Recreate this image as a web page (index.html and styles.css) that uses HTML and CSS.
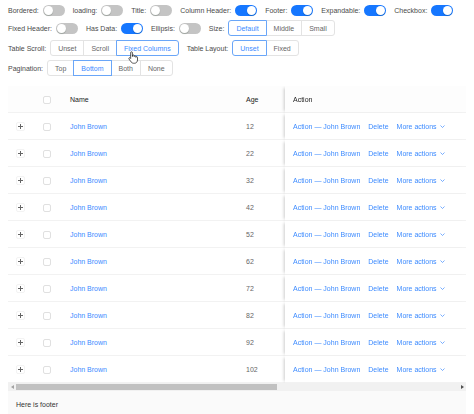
FILE: index.html
```html
<!DOCTYPE html>
<html lang="en">
<head>
<meta charset="utf-8">
<title>Table settings</title>
<link rel="stylesheet" href="styles.css">
</head>
<body>
<div class="controls">
  <div class="row row1">
    <div class="item"><span class="lbl">Bordered:</span><span class="switch"><span class="knob"></span></span></div>
    <div class="item"><span class="lbl">loading:</span><span class="switch"><span class="knob"></span></span></div>
    <div class="item"><span class="lbl">Title:</span><span class="switch"><span class="knob"></span></span></div>
    <div class="item"><span class="lbl">Column Header:</span><span class="switch on"><span class="knob"></span></span></div>
    <div class="item"><span class="lbl">Footer:</span><span class="switch on"><span class="knob"></span></span></div>
    <div class="item"><span class="lbl">Expandable:</span><span class="switch on"><span class="knob"></span></span></div>
    <div class="item"><span class="lbl">Checkbox:</span><span class="switch on"><span class="knob"></span></span></div>
  </div>
  <div class="row row2">
    <div class="item"><span class="lbl">Fixed Header:</span><span class="switch"><span class="knob"></span></span></div>
    <div class="item"><span class="lbl">Has Data:</span><span class="switch on"><span class="knob"></span></span></div>
    <div class="item"><span class="lbl">Ellipsis:</span><span class="switch"><span class="knob"></span></span></div>
    <div class="item"><span class="lbl">Size:</span>
      <div class="group"><span class="rb on">Default</span><span class="rb">Middle</span><span class="rb">Small</span></div>
    </div>
  </div>
  <div class="row row3">
    <div class="item"><span class="lbl">Table Scroll:</span>
      <div class="group"><span class="rb">Unset</span><span class="rb">Scroll</span><span class="rb on">Fixed Columns</span></div>
    </div>
    <div class="item"><span class="lbl">Table Layout:</span>
      <div class="group"><span class="rb on">Unset</span><span class="rb">Fixed</span></div>
    </div>
  </div>
  <div class="row row4">
    <div class="item"><span class="lbl">Pagination:</span>
      <div class="group"><span class="rb">Top</span><span class="rb on">Bottom</span><span class="rb">Both</span><span class="rb">None</span></div>
    </div>
  </div>
  <svg class="cursor" width="10" height="13" viewBox="0 0 20 26" aria-hidden="true">
    <path d="M7 1.5c1 0 1.8.8 1.8 1.8V11l.2-.1V9.5c0-1 .8-1.6 1.7-1.6s1.7.7 1.7 1.6v1.6c0-.9.8-1.5 1.7-1.5s1.7.7 1.7 1.6v1.5c0-.8.7-1.4 1.6-1.4.9 0 1.6.7 1.6 1.6V18c0 3.5-2.5 6.5-6 6.5H11c-2 0-3.6-1-4.8-2.6L2 16c-.6-.8-.4-1.8.3-2.3.7-.5 1.7-.4 2.3.3l.7.9V3.3C5.2 2.3 6 1.5 7 1.5z" fill="#fff" stroke="#111" stroke-width="1.4" stroke-linejoin="round"/>
  </svg>
</div>

<div class="table">
  <div class="scroller">
    <table class="tbl">
      <colgroup>
        <col class="c-exp"><col class="c-sel"><col class="c-name"><col class="c-age"><col class="c-addr"><col class="c-act">
      </colgroup>
      <thead>
        <tr>
          <th></th>
          <th class="sel"><span class="cb"></span></th>
          <th>Name</th>
          <th>Age</th>
          <th></th>
          <th class="act">Action</th>
        </tr>
      </thead>
      <tbody>
        <tr><td class="exp"><span class="plus"></span></td><td class="sel"><span class="cb"></span></td><td><a class="link">John Brown</a></td><td>12</td><td></td><td class="act"><div class="acts"><a class="link">Action — John Brown</a><a class="link">Delete</a><a class="link more">More actions<svg width="5" height="3" viewBox="0 0 10 6"><path d="M1 1l4 4 4-4" fill="none" stroke="#3d8bff" stroke-width="1.4"/></svg></a></div></td></tr>
        <tr><td class="exp"><span class="plus"></span></td><td class="sel"><span class="cb"></span></td><td><a class="link">John Brown</a></td><td>22</td><td></td><td class="act"><div class="acts"><a class="link">Action — John Brown</a><a class="link">Delete</a><a class="link more">More actions<svg width="5" height="3" viewBox="0 0 10 6"><path d="M1 1l4 4 4-4" fill="none" stroke="#3d8bff" stroke-width="1.4"/></svg></a></div></td></tr>
        <tr><td class="exp"><span class="plus"></span></td><td class="sel"><span class="cb"></span></td><td><a class="link">John Brown</a></td><td>32</td><td></td><td class="act"><div class="acts"><a class="link">Action — John Brown</a><a class="link">Delete</a><a class="link more">More actions<svg width="5" height="3" viewBox="0 0 10 6"><path d="M1 1l4 4 4-4" fill="none" stroke="#3d8bff" stroke-width="1.4"/></svg></a></div></td></tr>
        <tr><td class="exp"><span class="plus"></span></td><td class="sel"><span class="cb"></span></td><td><a class="link">John Brown</a></td><td>42</td><td></td><td class="act"><div class="acts"><a class="link">Action — John Brown</a><a class="link">Delete</a><a class="link more">More actions<svg width="5" height="3" viewBox="0 0 10 6"><path d="M1 1l4 4 4-4" fill="none" stroke="#3d8bff" stroke-width="1.4"/></svg></a></div></td></tr>
        <tr><td class="exp"><span class="plus"></span></td><td class="sel"><span class="cb"></span></td><td><a class="link">John Brown</a></td><td>52</td><td></td><td class="act"><div class="acts"><a class="link">Action — John Brown</a><a class="link">Delete</a><a class="link more">More actions<svg width="5" height="3" viewBox="0 0 10 6"><path d="M1 1l4 4 4-4" fill="none" stroke="#3d8bff" stroke-width="1.4"/></svg></a></div></td></tr>
        <tr><td class="exp"><span class="plus"></span></td><td class="sel"><span class="cb"></span></td><td><a class="link">John Brown</a></td><td>62</td><td></td><td class="act"><div class="acts"><a class="link">Action — John Brown</a><a class="link">Delete</a><a class="link more">More actions<svg width="5" height="3" viewBox="0 0 10 6"><path d="M1 1l4 4 4-4" fill="none" stroke="#3d8bff" stroke-width="1.4"/></svg></a></div></td></tr>
        <tr><td class="exp"><span class="plus"></span></td><td class="sel"><span class="cb"></span></td><td><a class="link">John Brown</a></td><td>72</td><td></td><td class="act"><div class="acts"><a class="link">Action — John Brown</a><a class="link">Delete</a><a class="link more">More actions<svg width="5" height="3" viewBox="0 0 10 6"><path d="M1 1l4 4 4-4" fill="none" stroke="#3d8bff" stroke-width="1.4"/></svg></a></div></td></tr>
        <tr><td class="exp"><span class="plus"></span></td><td class="sel"><span class="cb"></span></td><td><a class="link">John Brown</a></td><td>82</td><td></td><td class="act"><div class="acts"><a class="link">Action — John Brown</a><a class="link">Delete</a><a class="link more">More actions<svg width="5" height="3" viewBox="0 0 10 6"><path d="M1 1l4 4 4-4" fill="none" stroke="#3d8bff" stroke-width="1.4"/></svg></a></div></td></tr>
        <tr><td class="exp"><span class="plus"></span></td><td class="sel"><span class="cb"></span></td><td><a class="link">John Brown</a></td><td>92</td><td></td><td class="act"><div class="acts"><a class="link">Action — John Brown</a><a class="link">Delete</a><a class="link more">More actions<svg width="5" height="3" viewBox="0 0 10 6"><path d="M1 1l4 4 4-4" fill="none" stroke="#3d8bff" stroke-width="1.4"/></svg></a></div></td></tr>
        <tr><td class="exp"><span class="plus"></span></td><td class="sel"><span class="cb"></span></td><td><a class="link">John Brown</a></td><td>102</td><td></td><td class="act"><div class="acts"><a class="link">Action — John Brown</a><a class="link">Delete</a><a class="link more">More actions<svg width="5" height="3" viewBox="0 0 10 6"><path d="M1 1l4 4 4-4" fill="none" stroke="#3d8bff" stroke-width="1.4"/></svg></a></div></td></tr>
      </tbody>
    </table>
  </div>
  <div class="hscroll">
    <span class="sb-btn"><svg width="3" height="4" viewBox="0 0 3 4"><path d="M0 2L3 0v4z" fill="#a3a3a3"/></svg></span>
    <span class="sb-track"><span class="sb-thumb"></span></span>
    <span class="sb-btn"><svg width="3" height="4" viewBox="0 0 3 4"><path d="M3 2L0 0v4z" fill="#505050"/></svg></span>
  </div>
  <div class="footer">Here is footer</div>
</div>
</body>
</html>
```

FILE: styles.css
```css
* { box-sizing: border-box; }
html, body { margin: 0; }
body {
  padding: 0 8px;
  background: #fff;
  font-family: "Liberation Sans", Arial, sans-serif;
  font-size: 7px;
  line-height: 11px;
  color: #4a4a4a;
}

/* controls */
.controls { position: relative; padding-top: 2px; }
.row { display: flex; align-items: center; height: 16px; }
.row2 { margin-top: 2px; }
.row3 { margin-top: 4px; }
.row4 { margin-top: 4px; }
.item { display: flex; align-items: center; margin-right: 8px; }
.lbl { margin-right: 4px; white-space: nowrap; }

.switch {
  display: flex;
  justify-content: flex-start;
  align-items: center;
  width: 22px;
  height: 11px;
  padding: 1px;
  border-radius: 6px;
  background: #c4c4c4;
}
.switch.on { justify-content: flex-end; background: #1677ff; }
.knob {
  width: 9px;
  height: 9px;
  border-radius: 50%;
  background: #fff;
  box-shadow: 0 1px 1px rgba(0, 35, 11, 0.2);
}

.group { display: flex; }
.rb {
  display: flex;
  align-items: center;
  height: 16px;
  padding: 0 7px;
  margin-left: -1px;
  border: 1px solid #e3e3e3;
  background: #fff;
  color: #666;
  white-space: nowrap;
}
.rb:first-child { margin-left: 0; border-radius: 3px 0 0 3px; }
.rb:last-child { border-radius: 0 3px 3px 0; }
.rb.on { position: relative; z-index: 1; border-color: #6aa6f8; color: #3d8bff; }

.cursor { position: absolute; left: 120px; top: 51px; z-index: 5; }

/* table */
.table { margin-top: 10px; }
.scroller { width: 100%; overflow: hidden; }
.tbl {
  width: 777px;
  table-layout: fixed;
  border-collapse: separate;
  border-spacing: 0;
}
.c-exp { width: 24px; }
.c-sel { width: 30px; }
.c-name { width: 176px; }
.c-age { width: 100px; }
.c-addr { width: 266px; }
.c-act { width: 181px; }

.tbl th, .tbl td {
  height: 27px;
  padding: 0 8px;
  border-bottom: 1px solid #f2f2f2;
  text-align: left;
  white-space: nowrap;
  overflow: hidden;
  vertical-align: middle;
}
.tbl th { background: #fdfdfd; font-weight: 400; color: #222; }
.tbl td { background: #fff; color: #666; }
.tbl .sel { padding: 0; text-align: center; }
.tbl .exp { padding: 0; text-align: center; }
.tbl .act {
  position: sticky;
  right: 0;
  z-index: 2;
  overflow: visible;
  box-shadow: -3px 0 3px -2px rgba(0, 0, 0, 0.2);
}

.cb {
  display: inline-block;
  width: 8px;
  height: 8px;
  border: 1px solid #e0e0e0;
  border-radius: 2px;
  background: #fff;
  vertical-align: middle;
}
.plus {
  display: inline-block;
  width: 9px;
  height: 9px;
  border: 1px solid #f3f3f3;
  border-radius: 2px;
  vertical-align: middle;
  background:
    linear-gradient(#666, #666) center / 5px 1px no-repeat,
    linear-gradient(#666, #666) center / 1px 5px no-repeat,
    #fff;
}
.link { color: #3d8bff; text-decoration: none; }
.acts { display: flex; align-items: center; gap: 8px; }
.more { display: inline-flex; align-items: center; gap: 3px; }

/* fake horizontal scrollbar */
.hscroll { display: flex; height: 8px; background: #f1f1f1; }
.sb-btn { display: flex; align-items: center; justify-content: center; width: 8px; height: 8px; }
.sb-track { flex: 1; display: flex; align-items: center; }
.sb-thumb { width: 59%; height: 6px; background: #c1c1c1; }

.footer { padding: 8px; background: #fafafa; color: #333; }
```
